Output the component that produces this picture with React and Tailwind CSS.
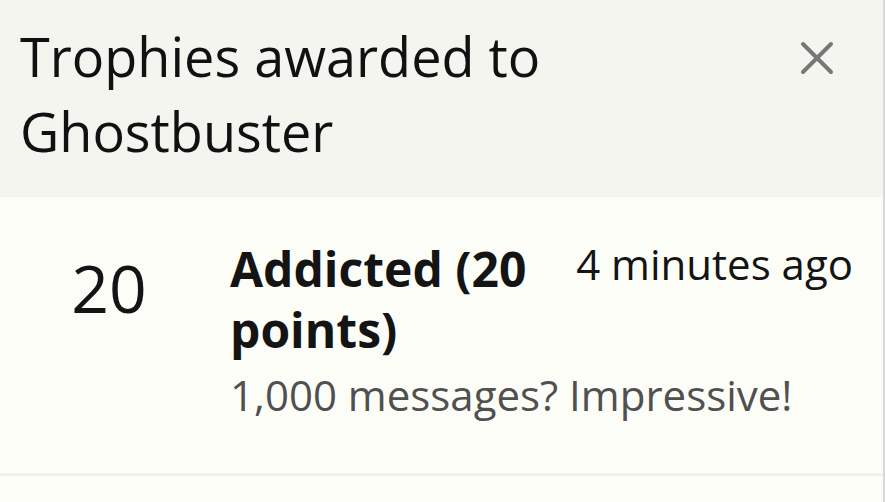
export default function App() {
  return (
    <div className="w-[885px] h-[502px] overflow-hidden bg-[#fdfdf8] border-r-2 border-[#d9d9d6] font-['Open_Sans',sans-serif] text-[#141414]">
      {/* Overlay header */}
      <div className="flex items-start bg-[#f5f5f0] pl-[20px] pr-[30px] pt-[19px] pb-[28px]">
        <h1 className="flex-1 text-[54px] leading-[75px] font-normal text-[#111]">
          Trophies awarded to Ghostbuster
        </h1>
        <button className="mt-[22px] mr-[19px] ml-[40px] shrink-0" aria-label="Close">
          <svg width="34" height="34" viewBox="0 0 34 34">
            <path d="M3 3 L31 31 M31 3 L3 31" stroke="#777" strokeWidth="4" strokeLinecap="round" />
          </svg>
        </button>
      </div>

      {/* Trophy row */}
      <div className="flex items-start border-b-[3px] border-[#f1f1ec] pl-[30px] pr-[30px] pt-[41px] pb-[49px]">
        <div className="w-[158px] shrink-0 text-center text-[66px] leading-[88px] mt-[5px]">20</div>
        <div className="flex-1 ml-[42px]">
          <div className="flex items-start">
            <h3 className="flex-1 text-[48px] leading-[61px] font-bold">Addicted (20 points)</h3>
            <div className="shrink-0 ml-[40px] -mt-[4px] text-[42px] leading-[59px]">4 minutes ago</div>
          </div>
          <div className="mt-[5px] text-[42px] leading-[59px] text-[#505050]">1,000 messages? Impressive!</div>
        </div>
      </div>
    </div>
  );
}
